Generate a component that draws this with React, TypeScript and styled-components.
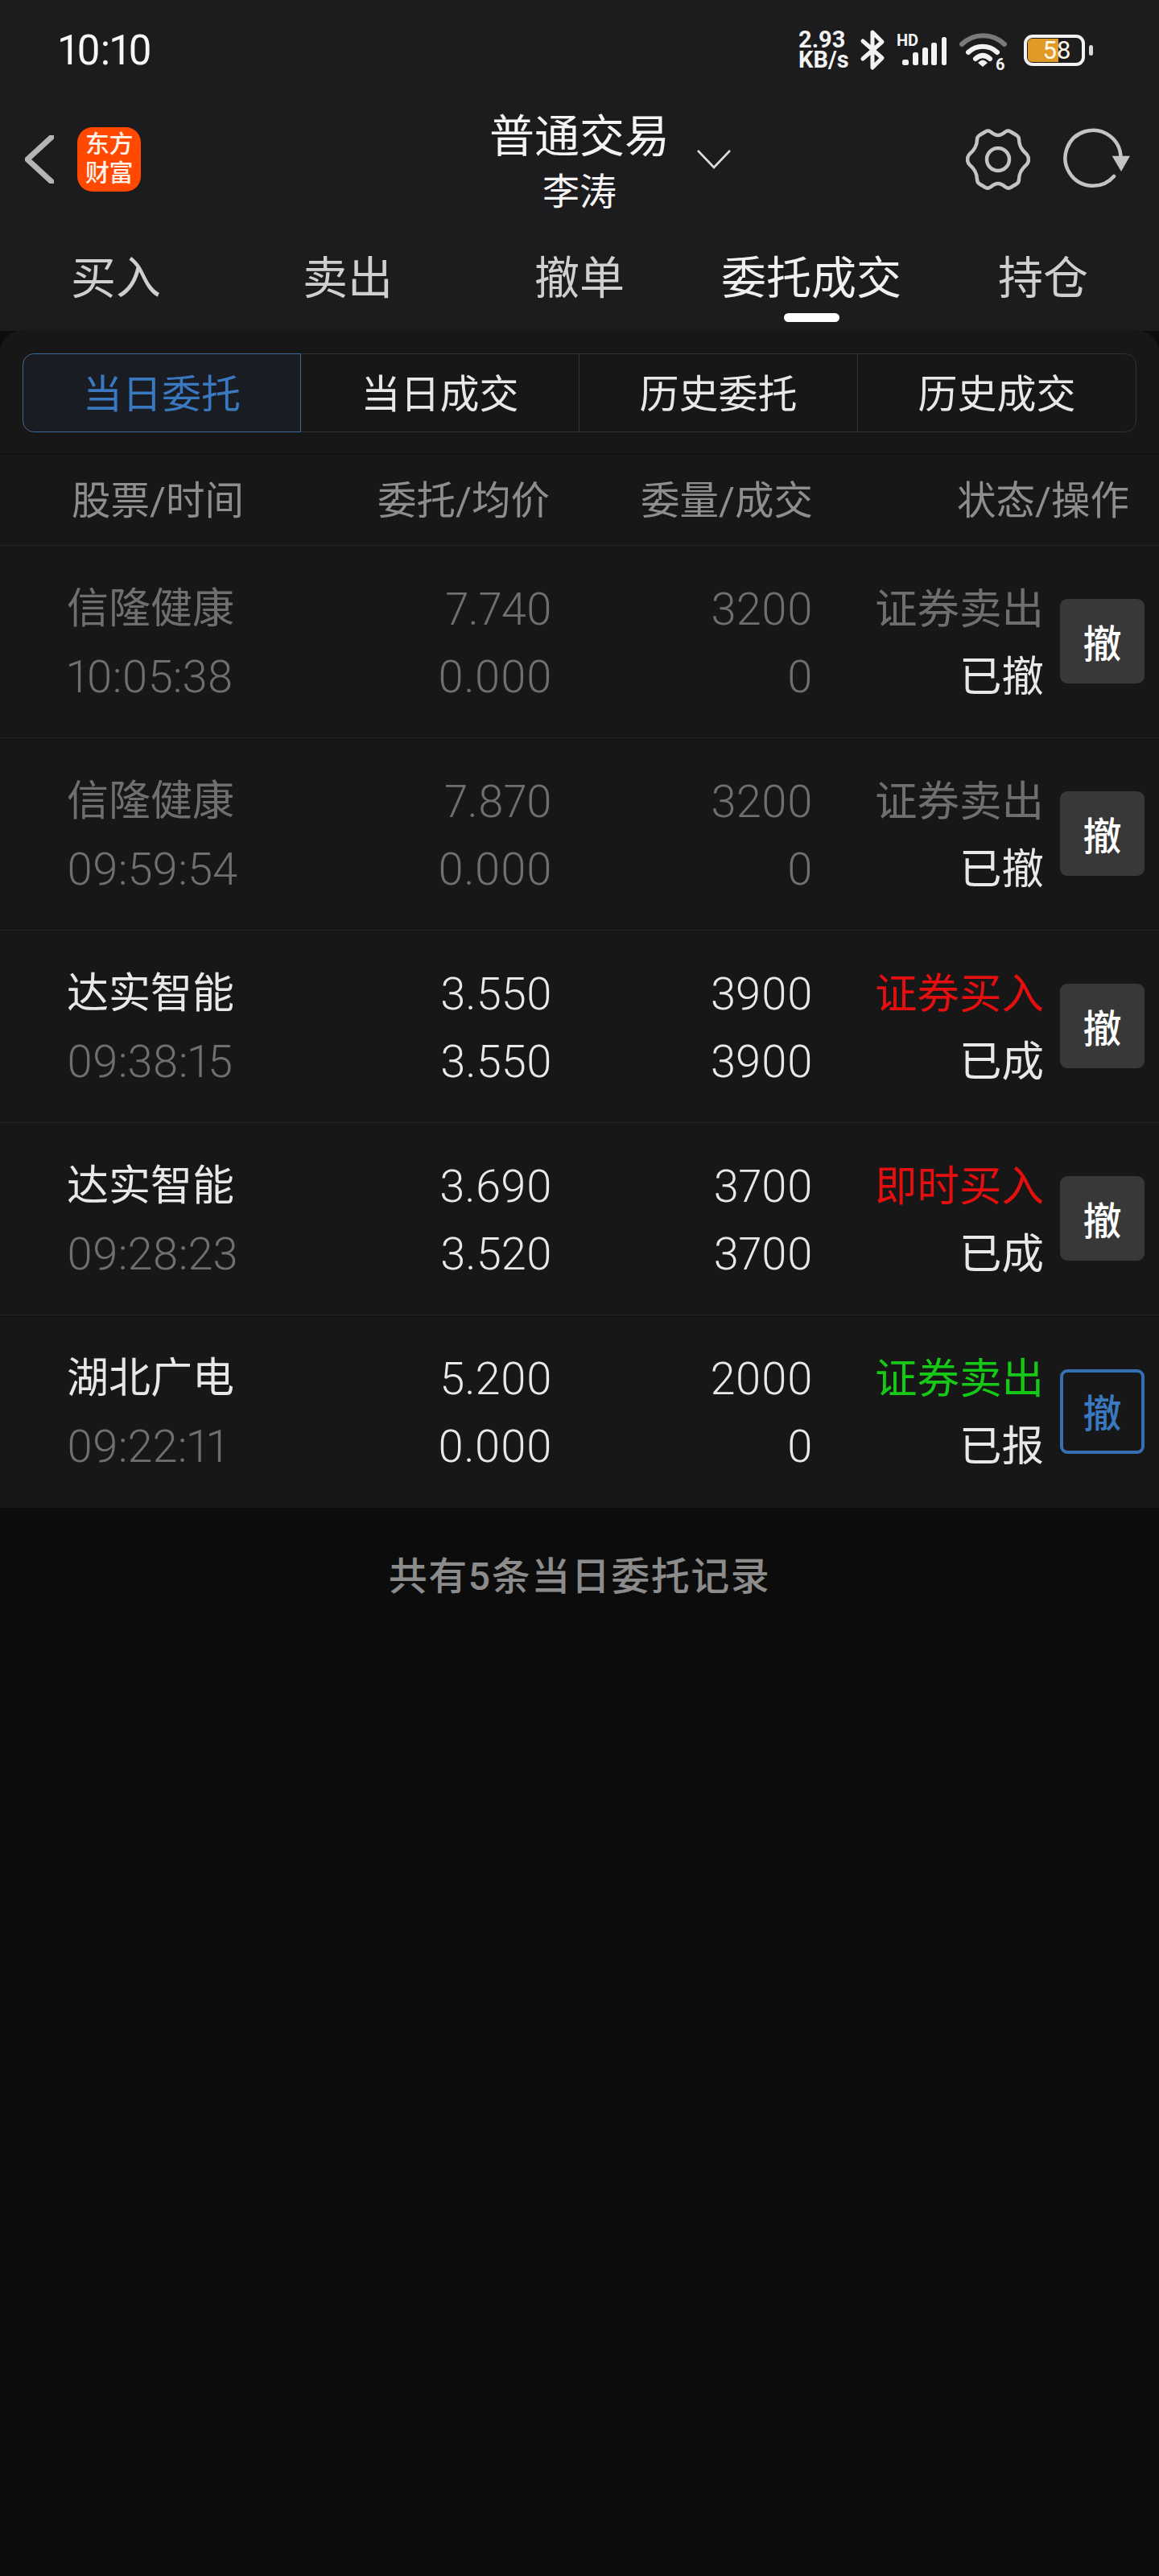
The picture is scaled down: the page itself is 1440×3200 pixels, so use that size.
import React from 'react';
import styled, { createGlobalStyle } from 'styled-components';

const GlobalStyle = createGlobalStyle`
  html, body {
    margin: 0;
    padding: 0;
    background: #0c0c0c;
    font-family: Roboto, "Noto Sans CJK SC", sans-serif;
  }
  * { box-sizing: border-box; }
`;

const COLORS = {
  top: '#1c1c1e',
  panel: '#171717',
  page: '#0c0c0c',
  line: '#262626',
  white: '#e8e8e8',
  dim: '#6f6f6f',
  head: '#8e8e90',
  blue: '#3a78c0',
  red: '#e60f0f',
  green: '#16c916',
};

const Page = styled.div`
  width: 1440px;
  min-height: 3200px;
  background: ${COLORS.page};
`;

const Top = styled.header`
  background: ${COLORS.top};
`;

const StatusBar = styled.div`
  height: 124px;
  padding: 0 82px 0 73px;
  display: flex;
  align-items: center;
  justify-content: space-between;
`;

const Clock = styled.span`
  font-size: 51px;
  font-weight: 400;
  color: #f6f6f6;
  font-variant-numeric: proportional-nums;
`;

const StatusIcons = styled.div`
  display: flex;
  align-items: center;
`;

const Speed = styled.div`
  width: 62px;
  margin-right: 15px;
  font-size: 29px;
  line-height: 25px;
  font-weight: 700;
  color: #f2f2f2;
  white-space: nowrap;
`;

const StatusSvg = styled.svg<{ $gap: number }>`
  display: block;
  overflow: visible;
  margin-right: ${({ $gap }) => $gap}px;
`;

const Battery = styled.div`
  display: flex;
  align-items: center;
`;

const BatteryBody = styled.div`
  position: relative;
  width: 76px;
  height: 39px;
  border: 4px solid #f2f2f2;
  border-radius: 11px;
  display: flex;
  align-items: center;
  justify-content: center;
`;

const BatteryFill = styled.div`
  position: absolute;
  left: 1px;
  top: 1px;
  bottom: 1px;
  width: 38px;
  background: #e09a25;
  border-radius: 5px 0 0 5px;
`;

const BatteryLevel = styled.span`
  position: relative;
  margin-left: 6px;
  font-size: 31px;
  line-height: 31px;
  color: #fff8e6;
`;

const BatteryNub = styled.div`
  width: 5px;
  height: 13px;
  margin-left: 5px;
  border-radius: 3px;
  background: #d8d8d8;
`;

const Nav = styled.div`
  height: 148px;
  display: grid;
  grid-template-columns: 1fr auto 1fr;
  align-items: center;
`;

const NavLeft = styled.div`
  display: flex;
  align-items: center;
  padding-left: 31px;
  gap: 29px;
`;

const Logo = styled.div`
  width: 79px;
  height: 80px;
  padding-top: 3px;
  border-radius: 19px;
  background: #ff4800;
  color: #fff3ea;
  font-size: 30px;
  line-height: 36px;
  font-weight: 500;
  text-align: center;
  letter-spacing: -0.5px;
`;

const Title = styled.div`
  padding-top: 12px;
  text-align: center;
  color: #f4f4f4;
`;

const TitleMain = styled.div`
  font-size: 56px;
  line-height: 69px;
`;

const TitleSub = styled.div`
  font-size: 46px;
  line-height: 67px;
`;

const NavRight = styled.div`
  display: flex;
  align-items: center;
  padding-right: 34px;
`;

const TitleCaret = styled.svg`
  display: block;
  margin: 0 0 1px 33px;
`;

const NavActions = styled.div`
  margin-left: auto;
  display: flex;
  align-items: center;
  gap: 38px;
`;

const Tabs = styled.nav`
  display: grid;
  grid-template-columns: repeat(5, 288px);
  height: 139px;
`;

const Tab = styled.div<{ $active?: boolean }>`
  padding-top: 41px;
  display: flex;
  flex-direction: column;
  align-items: center;
  font-size: 56px;
  line-height: 66px;
  color: ${({ $active }) => ($active ? '#f0f0f0' : '#cfcfcf')};
`;

const TabMarker = styled.div<{ $active?: boolean }>`
  width: 69px;
  height: 11px;
  margin-top: 10px;
  border-radius: 6px;
  background: ${({ $active }) => ($active ? '#fff' : 'transparent')};
`;

const Panel = styled.main`
  background: ${COLORS.panel};
  border-radius: 26px 26px 0 0;
`;

const SegmentWrap = styled.div`
  padding: 28px 28px 26px;
  border-bottom: 2px solid #101010;
`;

const Segments = styled.div`
  display: grid;
  grid-template-columns: repeat(4, 346px);
  height: 98px;
`;

const Segment = styled.div<{ $active?: boolean }>`
  display: flex;
  align-items: center;
  justify-content: center;
  margin-left: -1px;
  padding-bottom: 5px;
  font-size: 49px;
  color: ${({ $active }) => ($active ? COLORS.blue : COLORS.white)};
  background: ${({ $active }) => ($active ? '#191c22' : 'transparent')};
  border: 1.5px solid ${({ $active }) => ($active ? '#41699a' : '#333')};
  position: ${({ $active }) => ($active ? 'relative' : 'static')};
  z-index: ${({ $active }) => ($active ? 1 : 0)};
  &:first-child {
    margin-left: 0;
    border-radius: 14px 0 0 14px;
  }
  &:last-child {
    border-radius: 0 14px 14px 0;
  }
`;

const HeadRow = styled.div`
  height: 113px;
  padding: 0 37px 6px 89px;
  display: grid;
  grid-template-columns: 244px 350px 327px 393px;
  align-items: center;
  border-bottom: 1px solid ${COLORS.line};
  font-size: 48.5px;
  color: ${COLORS.head};
`;

const HeadCell = styled.div<{ $right?: boolean }>`
  text-align: ${({ $right }) => ($right ? 'right' : 'left')};
  white-space: nowrap;
`;

const Row = styled.div`
  height: 239px;
  padding: 0 18px 0 83px;
  display: grid;
  grid-template-columns: 252px 351px 324px 287px 125px;
  align-items: center;
  border-bottom: 1px solid ${COLORS.line};
  &:last-child {
    border-bottom: none;
  }
`;

const Cell = styled.div<{ $right?: boolean }>`
  padding-top: 3px;
  display: flex;
  flex-direction: column;
  align-items: ${({ $right }) => ($right ? 'flex-end' : 'flex-start')};
`;

const Line = styled.span<{ $color: string; $num?: boolean; $status?: boolean }>`
  height: 84px;
  line-height: 84px;
  font-size: ${({ $num, $status }) => ($num ? 56 : $status ? 52.5 : 52)}px;
  font-weight: ${({ $num }) => ($num ? 350 : 400)};
  font-variant-numeric: proportional-nums;
  color: ${({ $color }) => $color};
  white-space: nowrap;
`;

const CancelButton = styled.div<{ $live?: boolean }>`
  justify-self: end;
  width: 105px;
  height: 105px;
  margin-top: -1px;
  padding-bottom: 2px;
  display: flex;
  align-items: center;
  justify-content: center;
  border-radius: 9px;
  font-size: 48px;
  font-weight: 500;
  background: ${({ $live }) => ($live ? 'transparent' : '#383838')};
  border: ${({ $live }) => ($live ? `4px solid #3570b5` : 'none')};
  color: ${({ $live }) => ($live ? COLORS.blue : '#fff')};
`;

const Footer = styled.div`
  padding-top: 53px;
  text-align: center;
  font-size: 48px;
  font-weight: 500;
  line-height: 66px;
  letter-spacing: 1.5px;
  color: #8c8c8c;
`;

const BackIcon = () => (
  <svg width="36" height="60" viewBox="0 0 36 60" fill="none">
    <path d="M33.5 2 3 30l30.5 28" stroke="#b5b5b5" strokeWidth="7" strokeLinecap="round" strokeLinejoin="round" />
  </svg>
);

const GearIcon = () => (
  <svg width="80" height="80" viewBox="0 0 80 80" fill="none" stroke="#c4c4c4" strokeWidth="4.5">
    <path d="M24.5 5.5Q27.5 3.5 30.5 5.5C33.5 8 36.5 10 40 10C43.5 10 46.5 8 49.5 5.5Q52.5 3.5 55.5 5.5L63 10Q66 12 66 15C66 22 70 29 75 33Q78 36 78 40Q78 44 75 47C70 51 66 58 66 65Q66 68.5 63 70.5L55.5 75Q52.5 76.5 49.5 74.5C46.5 72 43.5 70 40 70C36.5 70 33.5 72 30.5 74.5Q27.5 76.5 24.5 75L17 70.5Q14 68.5 14 65C14 58 10 51 5 47Q2 44 2 40Q2 36 5 33C10 29 14 22 14 15Q14 12 17 10Z" />
    <circle cx="40" cy="40" r="14" />
  </svg>
);

const RefreshIcon = () => (
  <svg width="88" height="80" viewBox="0 0 88 80" fill="none">
    <path d="M66 61A34.5 34.5 0 1 1 74.5 38" stroke="#c4c4c4" strokeWidth="4.5" strokeLinecap="round" />
    <path d="M63.7 35.7H86L75 55Z" fill="#c4c4c4" />
  </svg>
);

const BARS = [
  { x: 7, y: 30, w: 8 },
  { x: 20, y: 21, w: 7 },
  { x: 32, y: 15, w: 7 },
  { x: 43, y: 9, w: 7 },
  { x: 56, y: 2, w: 6 },
];

const ORDERS = [
  { name: '信隆健康', time: '10:05:38', price: '7.740', avg: '0.000', qty: '3200', done: '0', kind: '证券卖出', state: '已撤', tone: 'dim' },
  { name: '信隆健康', time: '09:59:54', price: '7.870', avg: '0.000', qty: '3200', done: '0', kind: '证券卖出', state: '已撤', tone: 'dim' },
  { name: '达实智能', time: '09:38:15', price: '3.550', avg: '3.550', qty: '3900', done: '3900', kind: '证券买入', state: '已成', tone: 'red' },
  { name: '达实智能', time: '09:28:23', price: '3.690', avg: '3.520', qty: '3700', done: '3700', kind: '即时买入', state: '已成', tone: 'red' },
  { name: '湖北广电', time: '09:22:11', price: '5.200', avg: '0.000', qty: '2000', done: '0', kind: '证券卖出', state: '已报', tone: 'green' },
];

const KIND_COLOR: Record<string, string> = {
  dim: COLORS.dim,
  red: COLORS.red,
  green: COLORS.green,
};

export default function App() {
  return (
    <Page>
      <GlobalStyle />
      <Top>
        <StatusBar>
          <Clock>10:10</Clock>
          <StatusIcons>
            <Speed>
              2.93
              <br />
              KB/s
            </Speed>
            <StatusSvg $gap={15} width="30" height="50" viewBox="0 0 30 50" fill="none">
              <path d="M3 14 27 35 15 47V3L27 15 3 36" stroke="#f2f2f2" strokeWidth="5" strokeLinejoin="round" strokeLinecap="round" />
            </StatusSvg>
            <StatusSvg $gap={16} width="62" height="52" viewBox="0 -8 62 52">
              <text x="0" y="13" fontSize="20" fontWeight="700" fill="#f2f2f2" fontFamily="Roboto, sans-serif">HD</text>
              {BARS.map(bar => (
                <rect key={bar.x} x={bar.x} y={bar.y} width={bar.w} height={37 - bar.y} rx="2.5" fill="#f2f2f2" />
              ))}
            </StatusSvg>
            <StatusSvg $gap={20} width="60" height="60" viewBox="0 -10 60 60" fill="none">
              <path d="M3 13A38 38 0 0 1 56 13" stroke="#7a7a7a" strokeWidth="6" strokeLinecap="round" />
              <path d="M11 23A26 26 0 0 1 47 23" stroke="#f2f2f2" strokeWidth="6" strokeLinecap="round" />
              <path d="M20 31Q29 23 38 31" stroke="#f2f2f2" strokeWidth="6" strokeLinecap="round" />
              <path d="M23 36Q29 29 35 36L29 41Z" fill="#f2f2f2" />
              <text x="45" y="45" fontSize="20" fontWeight="700" fill="#f2f2f2" fontFamily="Roboto, sans-serif">6</text>
            </StatusSvg>
            <Battery>
              <BatteryBody>
                <BatteryFill />
                <BatteryLevel>58</BatteryLevel>
              </BatteryBody>
              <BatteryNub />
            </Battery>
          </StatusIcons>
        </StatusBar>
        <Nav>
          <NavLeft>
            <BackIcon />
            <Logo>
              东方
              <br />
              财富
            </Logo>
          </NavLeft>
          <Title>
            <TitleMain>普通交易</TitleMain>
            <TitleSub>李涛</TitleSub>
          </Title>
          <NavRight>
            <TitleCaret width="44" height="25" viewBox="0 0 44 25" fill="none">
              <path d="M2 2 22 23 42 2" stroke="#dcdcdc" strokeWidth="2.6" />
            </TitleCaret>
            <NavActions>
              <GearIcon />
              <RefreshIcon />
            </NavActions>
          </NavRight>
        </Nav>
        <Tabs>
          {['买入', '卖出', '撤单', '委托成交', '持仓'].map(label => (
            <Tab key={label} $active={label === '委托成交'}>
              {label}
              <TabMarker $active={label === '委托成交'} />
            </Tab>
          ))}
        </Tabs>
      </Top>
      <Panel>
        <SegmentWrap>
          <Segments>
            {['当日委托', '当日成交', '历史委托', '历史成交'].map((label, idx) => (
              <Segment key={label} $active={idx === 0}>
                {label}
              </Segment>
            ))}
          </Segments>
        </SegmentWrap>
        <HeadRow>
          <HeadCell>股票/时间</HeadCell>
          <HeadCell $right>委托/均价</HeadCell>
          <HeadCell $right>委量/成交</HeadCell>
          <HeadCell $right>状态/操作</HeadCell>
        </HeadRow>
        {ORDERS.map(order => {
          const main = order.tone === 'dim' ? COLORS.dim : COLORS.white;
          return (
            <Row key={order.time}>
              <Cell>
                <Line $color={main}>{order.name}</Line>
                <Line $color={COLORS.dim} $num>{order.time}</Line>
              </Cell>
              <Cell $right>
                <Line $color={main} $num>{order.price}</Line>
                <Line $color={main} $num>{order.avg}</Line>
              </Cell>
              <Cell $right>
                <Line $color={main} $num>{order.qty}</Line>
                <Line $color={main} $num>{order.done}</Line>
              </Cell>
              <Cell $right>
                <Line $color={KIND_COLOR[order.tone]} $status>{order.kind}</Line>
                <Line $color={COLORS.white} $status>{order.state}</Line>
              </Cell>
              <CancelButton $live={order.state === '已报'}>撤</CancelButton>
            </Row>
          );
        })}
      </Panel>
      <Footer>共有5条当日委托记录</Footer>
    </Page>
  );
}
